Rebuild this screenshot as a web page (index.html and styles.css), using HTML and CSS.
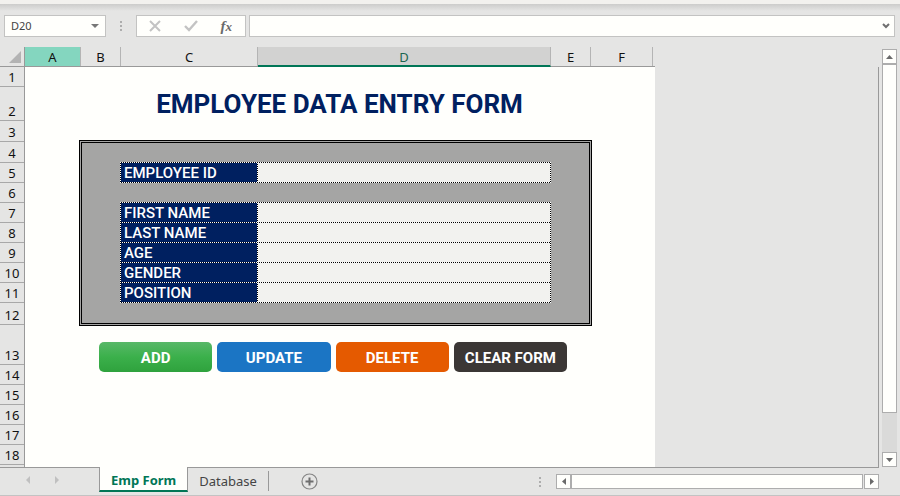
FILE: index.html
```html
<!DOCTYPE html>
<html lang="en">
<head>
<meta charset="utf-8">
<title>Employee Data Entry Form</title>
<link rel="stylesheet" href="styles.css">
</head>
<body>
<div class="app">
  <div class="ribbon-edge"></div>
  <header class="formula-bar">
    <div class="name-box">
      <input class="name-input" type="text" value="D20" aria-label="Name box">
      <button class="icon-btn name-toggle" type="button" aria-label="Open name list"><svg width="8" height="4" viewBox="0 0 8 4"><path d="M0 0h8L4 4z" fill="#777"/></svg></button>
    </div>
    <div class="grip"><i></i><i></i><i></i></div>
    <div class="formula-tools">
      <button class="icon-btn" type="button" aria-label="Cancel"><svg width="12" height="12" viewBox="0 0 12 12"><path d="M1 1l10 10M11 1L1 11" stroke="#c3c3c3" stroke-width="2" fill="none"/></svg></button>
      <button class="icon-btn" type="button" aria-label="Enter"><svg width="14" height="12" viewBox="0 0 14 12"><path d="M1 6l4 4 8-9" stroke="#c3c3c3" stroke-width="2.4" fill="none"/></svg></button>
      <button class="icon-btn fx" type="button" aria-label="Insert function"><span class="fx-f">f</span><span class="fx-x">x</span></button>
    </div>
    <div class="formula-box">
      <input class="formula-input" type="text" aria-label="Formula">
      <button class="icon-btn" type="button" aria-label="Expand formula bar"><svg width="8" height="6" viewBox="0 0 8 6"><path d="M1 1l3 3 3-3" stroke="#707070" stroke-width="2" fill="none"/></svg></button>
    </div>
  </header>

  <main class="workspace">
    <div class="sheet">
      <div class="column-heads">
        <div class="corner"><svg width="12" height="12" viewBox="0 0 12 12"><path d="M12 0v12H0z" fill="#b3b3b3"/></svg></div>
        <div class="col col-a">A</div>
        <div class="col col-b">B</div>
        <div class="col col-c">C</div>
        <div class="col col-d">D</div>
        <div class="col col-e">E</div>
        <div class="col col-f">F</div>
        <div class="col-end"></div>
      </div>
      <div class="sheet-body">
        <div class="row-heads">
          <div class="row">1</div>
          <div class="row row-title">2</div>
          <div class="row row-mid">3</div>
          <div class="row row-mid">4</div>
          <div class="row">5</div>
          <div class="row">6</div>
          <div class="row">7</div>
          <div class="row">8</div>
          <div class="row">9</div>
          <div class="row">10</div>
          <div class="row">11</div>
          <div class="row row-pad">12</div>
          <div class="row row-buttons">13</div>
          <div class="row">14</div>
          <div class="row">15</div>
          <div class="row">16</div>
          <div class="row">17</div>
          <div class="row">18</div>
        </div>
        <form class="cells">
          <h1 class="title">EMPLOYEE DATA ENTRY FORM</h1>
          <div class="panel">
            <div class="fields">
              <label class="label" for="emp-id">EMPLOYEE ID</label><input class="value" id="emp-id" type="text">
            </div>
            <div class="fields">
              <label class="label" for="first">FIRST NAME</label><input class="value" id="first" type="text">
              <label class="label" for="last">LAST NAME</label><input class="value" id="last" type="text">
              <label class="label" for="age">AGE</label><input class="value" id="age" type="text">
              <label class="label" for="gender">GENDER</label><input class="value" id="gender" type="text">
              <label class="label" for="position">POSITION</label><input class="value" id="position" type="text">
            </div>
          </div>
          <div class="actions">
            <button class="action add" type="button">ADD</button>
            <button class="action update" type="button">UPDATE</button>
            <button class="action delete" type="button">DELETE</button>
            <button class="action clear" type="button">CLEAR FORM</button>
          </div>
        </form>
      </div>
    </div>
    <div class="v-scroll">
      <button class="scroll-btn" type="button" aria-label="Scroll up"><svg width="7" height="4" viewBox="0 0 7 4"><path d="M0 4h7L3.500 0z" fill="#6a6a6a"/></svg></button>
      <div class="v-track"><div class="v-thumb"></div></div>
      <button class="scroll-btn" type="button" aria-label="Scroll down"><svg width="7" height="4" viewBox="0 0 7 4"><path d="M0 0h7L3.500 4z" fill="#6a6a6a"/></svg></button>
    </div>
  </main>

  <footer class="tab-bar">
    <div class="tab-nav">
      <button class="icon-btn" type="button" aria-label="Previous sheet"><svg width="4" height="8" viewBox="0 0 4 8"><path d="M4 0v8L0 4z" fill="#c0c0c0"/></svg></button>
      <button class="icon-btn" type="button" aria-label="Next sheet"><svg width="4" height="8" viewBox="0 0 4 8"><path d="M0 0v8l4-4z" fill="#c0c0c0"/></svg></button>
    </div>
    <button class="tab active" type="button">Emp Form</button>
    <button class="tab" type="button">Database</button>
    <div class="new-sheet">
      <button class="icon-btn" type="button" aria-label="New sheet"><svg width="17" height="17" viewBox="0 0 17 17"><circle cx="8.500" cy="8.500" r="7.500" fill="none" stroke="#858585" stroke-width="1.200"/><path d="M8.500 4.500v8M4.500 8.500h8" stroke="#6e6e6e" stroke-width="2"/></svg></button>
    </div>
    <div class="h-area">
      <div class="grip"><i></i><i></i><i></i></div>
      <div class="h-scroll">
        <button class="scroll-btn" type="button" aria-label="Scroll left"><svg width="4" height="7" viewBox="0 0 4 7"><path d="M4 0v7L0 3.500z" fill="#6a6a6a"/></svg></button>
        <div class="h-thumb"></div>
        <button class="scroll-btn" type="button" aria-label="Scroll right"><svg width="4" height="7" viewBox="0 0 4 7"><path d="M0 0v7l4-3.500z" fill="#6a6a6a"/></svg></button>
      </div>
    </div>
  </footer>
</div>
</body>
</html>
```
FILE: styles.css
```css
* { box-sizing: border-box; }

body {
  margin: 0;
  background: #e5e5e4;
  font-family: "Open Sans", "Noto Sans", sans-serif;
  color: #111;
}

button, input { font: inherit; border: 0; padding: 0; margin: 0; border-radius: 0; }
input { outline: 0; min-width: 0; }
svg { display: block; }

.app {
  min-height: 100vh;
  display: flex;
  flex-direction: column;
  border-bottom: 1px solid #c3c3c3;
}

.ribbon-edge {
  height: 11px;
  border-top: 4px solid #f2f1ee;
  background: linear-gradient(#cccccb, #e5e5e4);
}

/* Formula bar */
.formula-bar {
  display: flex;
  padding: 4px 5px 10px 4px;
}
.name-box, .formula-tools, .formula-box {
  height: 22px;
  display: flex;
  align-items: center;
  background: #fffffc;
  border: 1px solid #c3c3c2;
}
.name-box { width: 102px; padding: 0 6px; }
.name-input {
  flex: 1;
  font-family: "Noto Sans", sans-serif;
  font-size: 11px;
  line-height: 18px;
  color: #444;
  background: transparent;
}
.icon-btn {
  display: flex;
  align-items: center;
  justify-content: center;
  background: transparent;
}
.grip {
  display: flex;
  flex-direction: column;
  justify-content: center;
  gap: 2px;
}
.grip i { width: 2px; height: 2px; background: #adadad; }
.formula-bar .grip { width: 30px; align-items: center; }
.formula-tools { width: 110px; justify-content: space-between; padding: 0 13px 0 12px; }
.fx {
  font-family: "Liberation Serif", serif;
  font-style: italic;
  font-weight: 700;
  color: #6a6a6a;
  line-height: 16px;
}
.fx-f { font-size: 15px; }
.fx-x { font-size: 13px; padding-top: 2px; }
.formula-box { flex: 1; margin-left: 3px; padding-right: 4px; }
.formula-input { flex: 1; background: transparent; font-size: 12px; }

/* Worksheet */
.workspace { flex: 1; display: flex; padding-right: 3px; }
.sheet { flex: 1; display: flex; flex-direction: column; margin-right: 3px; }
.sheet-body {
  display: grid;
  grid-template-columns: 25px 630px;
}
.column-heads {
  display: grid;
  grid-template-columns: 25px 56px 40px 137px 293px 40px 62px 2px;
  grid-template-rows: 19px;
  height: 20px;
  width: 655px;
  border-bottom: 1px solid #999;
}
.corner {
  display: flex;
  justify-content: flex-end;
  padding: 4px 3px 0 0;
  border-right: 1px solid #999;
}
.col {
  border-right: 1px solid #b4b4b4;
  font-family: "Noto Sans", sans-serif;
  font-size: 13px;
  line-height: 20px;
  text-align: center;
}
.col-a { background: #84d6bf; }
.col-d {
  background: #d2d2d1;
  color: #1c6650;
  margin-bottom: -1px;
  border-bottom: 2px solid #007656;
}
.sheet-body { flex: 1; border-right: 1px solid #999; }
.row-heads { border-right: 1px solid #999; }
.row {
  height: 20px;
  display: flex;
  align-items: flex-end;
  justify-content: center;
  border-bottom: 1px solid #a8a8a8;
  font-family: "Noto Sans", sans-serif;
  font-size: 13px;
  line-height: 18px;
}
.row-title { height: 34px; }
.row-mid { height: 21px; }
.row-pad { height: 22px; }
.row-buttons { height: 40px; }

.cells {
  background: #fffffc;
  padding: 20px 63px 0 54px;
  font-family: Roboto, "Open Sans", sans-serif;
}
.title {
  margin: 0 0 19px;
  padding-left: 8px;
  text-align: center;
  font-size: 26px;
  font-weight: 700;
  line-height: 34px;
  color: #002060;
}
.panel {
  display: flex;
  flex-direction: column;
  gap: 19px;
  padding: 19px 38px 20px;
  border: 3px double #000;
  background: #a5a5a4;
}
/* The dotted rules are a checkerboard showing through the one-pixel gaps. */
.fields {
  display: grid;
  grid-template-columns: 136px 1fr;
  grid-auto-rows: 19px;
  gap: 1px;
  padding: 1px;
  background: repeating-conic-gradient(#000 0 25%, #fff 0 50%) 0 0 / 2px 2px;
}
.label {
  padding: 1px 3px 0;
  background: #002060;
  color: #fff;
  font-size: 15px;
  font-weight: 500;
  line-height: 18px;
}
.value { width: 100%; padding: 0 3px; background: #f2f2ef; font-size: 15px; }

.actions {
  display: grid;
  grid-template-columns: repeat(4, 1fr);
  gap: 5px;
  padding: 16px 25px 0 20px;
}
.action {
  height: 30px;
  padding-top: 2px;
  border-radius: 5px;
  color: #fff;
  font-size: 15px;
  font-weight: 700;
}
.add { background: linear-gradient(#58b868, #3bb04b 50%, #2fa23d); }
.update { background: #1b75c4; }
.delete { background: #e55a00; }
.clear { background: #3b3735; }

/* Scroll bars */
.scroll-btn {
  width: 15px;
  height: 15px;
  display: flex;
  align-items: center;
  justify-content: center;
  background: #fffffc;
  border: 1px solid #adadad;
}
.v-scroll { display: flex; flex-direction: column; padding-top: 2px; }
.v-track { flex: 1; background: #dadad9; }
.v-thumb { height: 90%; background: #fffffc; border: 1px solid #adadad; }

/* Sheet tabs */
.tab-bar { height: 28px; display: flex; align-items: flex-start; }
.tab-nav {
  width: 99px;
  height: 25px;
  display: flex;
  align-items: center;
  gap: 25px;
  padding-left: 26px;
  border-top: 1px solid #999;
}
.tab {
  height: 25px;
  padding: 2px 11px 0;
  background: transparent;
  border-top: 1px solid #999;
  font-family: "Noto Sans", sans-serif;
  font-size: 13px;
  color: #444;
}
.tab.active {
  padding-top: 3px;
  border: solid #999;
  border-width: 0 1px;
  border-bottom: 2px solid #007656;
  background: #fffffc;
  color: #007656;
  font-weight: 700;
}
.new-sheet {
  width: 82px;
  padding-top: 3px;
  border-top: 1px solid #999;
}
.new-sheet .icon-btn {
  width: 100%;
  height: 20px;
  border-left: 1px solid #999;
}
.h-area {
  flex: 1;
  display: flex;
  justify-content: flex-end;
  gap: 15px;
  margin-right: 21px;
  padding-top: 6px;
  border-top: 1px solid #999;
}
.h-scroll { width: 323px; display: flex; }
.h-thumb { flex: 1; margin-right: 1px; background: #fffffc; border: 1px solid #adadad; }
```
